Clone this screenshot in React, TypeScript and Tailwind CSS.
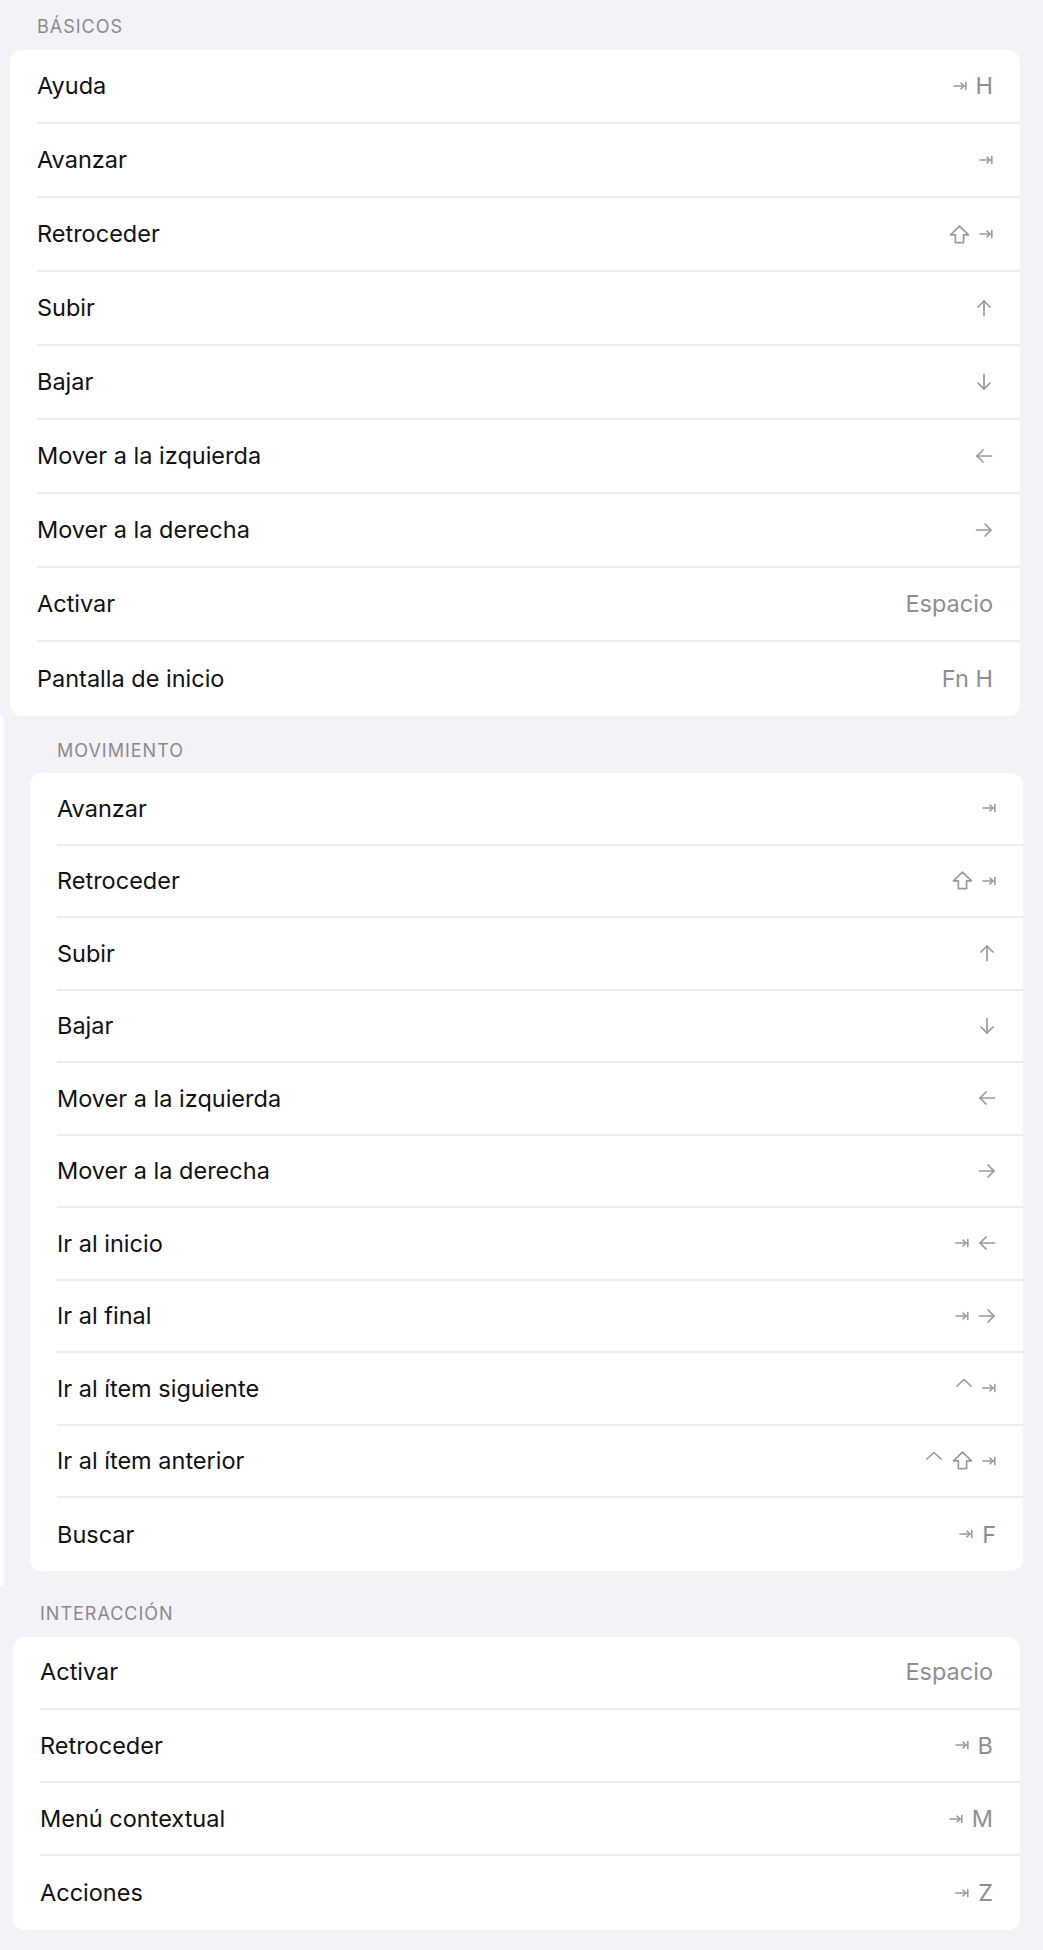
import React from "react";

type Tok = string;

const GRAY = "#9a9a9e";

function Tab() {
  return (
    <svg width="14" height="10" viewBox="0 0 14 10" fill="none" stroke={GRAY} strokeWidth="1.6" strokeLinecap="round" strokeLinejoin="round">
      <path d="M1 5 H11" />
      <path d="M8 2.2 L11 5 L8 7.8" />
      <path d="M12.8 1.5 V8.5" />
    </svg>
  );
}

function Shift() {
  return (
    <svg width="21" height="19" viewBox="0 0 21 19" fill="none" stroke={GRAY} strokeWidth="1.7" strokeLinejoin="round">
      <path d="M10.5 1.2 L19.5 9.8 H14.6 V17.6 H6.4 V9.8 H1.5 Z" />
    </svg>
  );
}

function Ctrl() {
  return (
    <svg width="18" height="18" viewBox="0 0 18 18" fill="none" stroke={GRAY} strokeWidth="1.7" strokeLinecap="round" strokeLinejoin="round" style={{ marginTop: "-6px" }}>
      <path d="M2 10 L9 3.5 L16 10" />
    </svg>
  );
}

function Arrow({ dir }: { dir: "up" | "down" | "left" | "right" }) {
  const rot = { up: 0, right: 90, down: 180, left: 270 }[dir];
  return (
    <svg width="18" height="18" viewBox="0 0 18 18" fill="none" stroke={GRAY} strokeWidth="1.7" strokeLinecap="round" strokeLinejoin="round" style={{ transform: `rotate(${rot}deg)` }}>
      <path d="M9 16.5 V2" />
      <path d="M3 8 L9 2 L15 8" />
    </svg>
  );
}

function Key({ t }: { t: Tok }) {
  if (t === "tab") return <Tab />;
  if (t === "shift") return <Shift />;
  if (t === "ctrl") return <Ctrl />;
  if (t === "up" || t === "down" || t === "left" || t === "right") return <Arrow dir={t} />;
  return <span className="text-[23.5px] text-[#8e8e93] leading-none">{t}</span>;
}

type Item = { label: string; keys: Tok[] };

function Card({ items, rowH }: { items: Item[]; rowH: string }) {
  return (
    <div className="bg-white rounded-[12px] overflow-hidden">
      {items.map((it, i) => (
        <div key={i} className={`${rowH} pl-[27px] flex`}>
          <div
            className={`flex-1 flex items-center justify-between pr-[27px] ${
              i < items.length - 1 ? "border-b-2 border-[#ececf0]" : ""
            }`}
          >
            <span className="text-[23.5px] text-[#111113] leading-none">{it.label}</span>
            <div className="flex items-center gap-[9px]">
              {it.keys.map((k, j) => (
                <Key key={j} t={k} />
              ))}
            </div>
          </div>
        </div>
      ))}
    </div>
  );
}

const basicos: Item[] = [
  { label: "Ayuda", keys: ["tab", "H"] },
  { label: "Avanzar", keys: ["tab"] },
  { label: "Retroceder", keys: ["shift", "tab"] },
  { label: "Subir", keys: ["up"] },
  { label: "Bajar", keys: ["down"] },
  { label: "Mover a la izquierda", keys: ["left"] },
  { label: "Mover a la derecha", keys: ["right"] },
  { label: "Activar", keys: ["Espacio"] },
  { label: "Pantalla de inicio", keys: ["Fn H"] },
];

const movimiento: Item[] = [
  { label: "Avanzar", keys: ["tab"] },
  { label: "Retroceder", keys: ["shift", "tab"] },
  { label: "Subir", keys: ["up"] },
  { label: "Bajar", keys: ["down"] },
  { label: "Mover a la izquierda", keys: ["left"] },
  { label: "Mover a la derecha", keys: ["right"] },
  { label: "Ir al inicio", keys: ["tab", "left"] },
  { label: "Ir al final", keys: ["tab", "right"] },
  { label: "Ir al ítem siguiente", keys: ["ctrl", "tab"] },
  { label: "Ir al ítem anterior", keys: ["ctrl", "shift", "tab"] },
  { label: "Buscar", keys: ["tab", "F"] },
];

const interaccion: Item[] = [
  { label: "Activar", keys: ["Espacio"] },
  { label: "Retroceder", keys: ["tab", "B"] },
  { label: "Menú contextual", keys: ["tab", "M"] },
  { label: "Acciones", keys: ["tab", "Z"] },
];

export default function App() {
  return (
    <div
      className="w-[1043px] h-[1950px] bg-[#f2f2f7] flex flex-col"
      style={{ fontFamily: "Inter, 'Liberation Sans', sans-serif" }}
    >
      <div className="pl-[10px] pr-[23px]">
        <div className="h-[50px] pl-[27px] flex items-center pt-[4px]">
          <span className="text-[18px] tracking-[1px] text-[#8a8a8e] leading-none">BÁSICOS</span>
        </div>
        <Card items={basicos} rowH="h-[74px]" />
      </div>
      <div className="border-l-[3px] border-white pl-[27px] pr-[20px] pb-[15px]">
        <div className="h-[57px] pl-[27px] flex items-center pt-[12px]">
          <span className="text-[18px] tracking-[1px] text-[#8a8a8e] leading-none">MOVIMIENTO</span>
        </div>
        <Card items={movimiento} rowH="h-[72.5px]" />
      </div>
      <div className="pl-[13px] pr-[23px]">
        <div className="h-[51px] pl-[27px] flex items-center pt-[6px]">
          <span className="text-[18px] tracking-[1px] text-[#8a8a8e] leading-none">INTERACCIÓN</span>
        </div>
        <Card items={interaccion} rowH="h-[73.25px]" />
      </div>
    </div>
  );
}
